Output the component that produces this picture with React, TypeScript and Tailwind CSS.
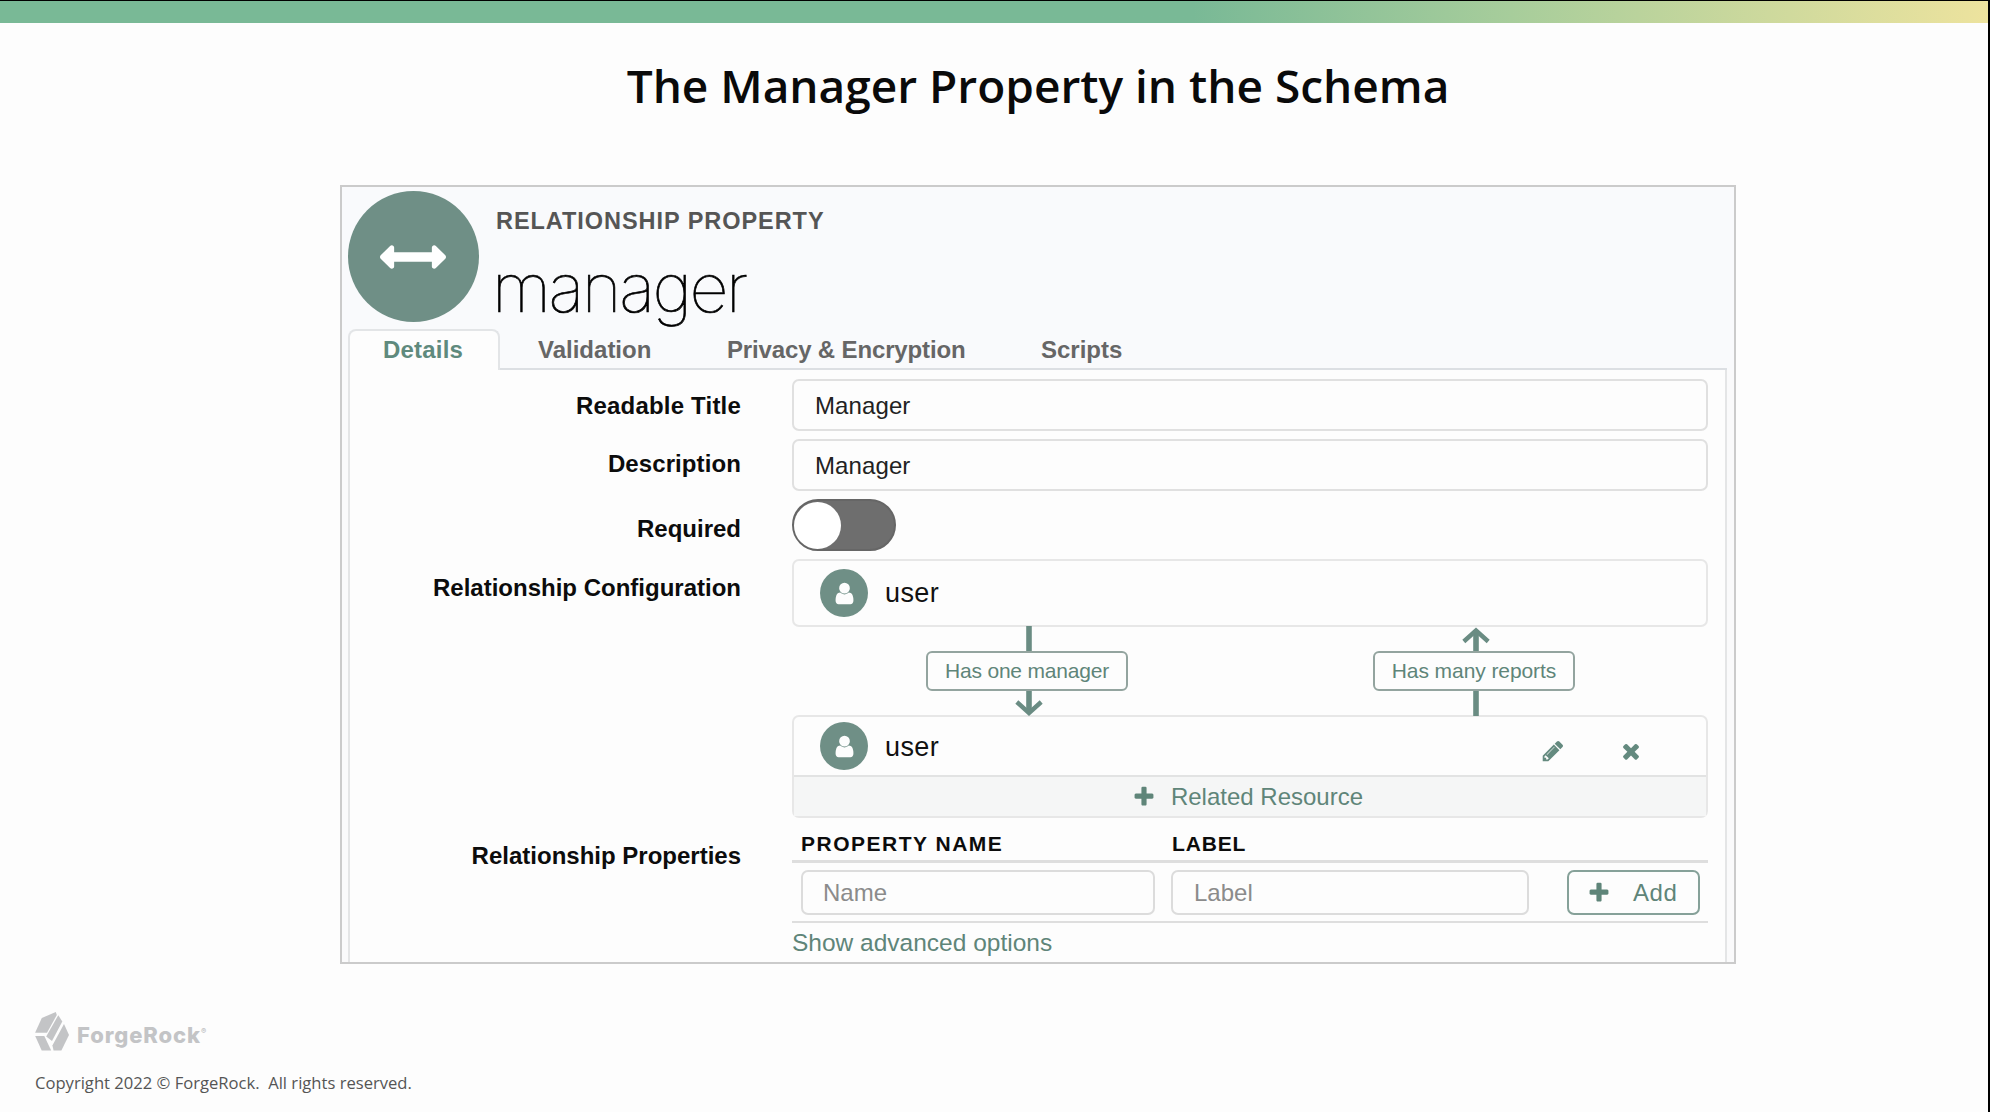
import type { ReactNode } from "react";

const ICONS = {
  arrows:
    "M1792 896q0 26-19 45l-256 256q-19 19-45 19t-45-19-19-45v-128h-1024v128q0 26-19 45t-45 19-45-19l-256-256q-19-19-19-45t19-45l256-256q19-19 45-19t45 19 19 45v128h1024v-128q0-26 19-45t45-19 45 19l256 256q19 19 19 45z",
  user: "M1536 1399q0 109-62.5 187t-150.5 78h-854q-88 0-150.5-78t-62.5-187q0-85 8.5-160.5t31.5-152 58.5-131 94-89 134.5-34.5q131 128 313 128t313-128q76 0 134.5 34.5t94 89 58.5 131 31.5 152 8.5 160.5zm-256-887q0 159-112.5 271.5t-271.5 112.5-271.5-112.5-112.5-271.5 112.5-271.5 271.5-112.5 271.5 112.5 112.5 271.5z",
  plus: "M1600 736v192q0 40-28 68t-68 28h-416v416q0 40-28 68t-68 28h-192q-40 0-68-28t-28-68v-416h-416q-40 0-68-28t-28-68v-192q0-40 28-68t68-28h416v-416q0-40 28-68t68-28h192q40 0 68 28t28 68v416h416q40 0 68 28t28 68z",
  times:
    "M1490 1322q0 40-28 68l-136 136q-28 28-68 28t-68-28l-294-294-294 294q-28 28-68 28t-68-28l-136-136q-28-28-28-68t28-68l294-294-294-294q-28-28-28-68t28-68l136-136q28-28 68-28t68 28l294 294 294-294q28-28 68-28t68 28l136 136q28 28 28 68t-28 68l-294 294 294 294q28 28 28 68z",
  pencil:
    "M491 1536l91-91-235-235-91 91v107h128v128h107zm523-928q0-22-22-22-10 0-17 7l-542 542q-7 7-7 17 0 22 22 22 10 0 17-7l542-542q7-7 7-17zm-54-192l416 416-832 832h-416v-416zm683 96q0 53-37 90l-166 166-416-416 166-165q36-38 90-38 53 0 91 38l235 234q37 39 37 91z",
};

function Icon({ name, className }: { name: keyof typeof ICONS; className: string }) {
  return (
    <svg viewBox="0 0 1792 1792" fill="currentColor" className={className} aria-hidden="true">
      <path d={ICONS[name]} />
    </svg>
  );
}

function Row({
  label,
  labelClass,
  className = "",
  children,
}: {
  label: string;
  labelClass: string;
  className?: string;
  children: ReactNode;
}) {
  return (
    <div className={`flex gap-[51px] ${className}`}>
      <div
        className={`w-[391px] shrink-0 text-right text-[24px] leading-[30px] font-bold whitespace-nowrap text-[#0c0c0c] ${labelClass}`}
      >
        {label}
      </div>
      <div className="w-[916px] shrink-0">{children}</div>
    </div>
  );
}

function TextInput({ value }: { value: string }) {
  return (
    <div className="flex h-[52px] items-center rounded-[7px] border-2 border-[#e0e0e0] pt-px pl-[21px] text-[24px] tracking-[0.1px] text-[#222]">
      {value}
    </div>
  );
}

function Resource({ className, textClass, children }: { className: string; textClass?: string; children?: ReactNode }) {
  return (
    <div className={`flex items-center pl-[26px] ${className}`}>
      <span className="flex size-12 items-center justify-center rounded-full bg-[#6f8f86] text-[#fdfdfd]">
        <Icon name="user" className="size-[25px]" />
      </span>
      <span className={`ml-[17px] text-[27px] leading-[30px] tracking-[0.4px] text-[#111] ${textClass ?? ""}`}>
        user
      </span>
      {children}
    </div>
  );
}

function Stem({ head }: { head?: "up" | "down" }) {
  return (
    <svg viewBox="0 0 30 25" className="h-[25px] w-[30px]" fill="none" stroke="#6a8c83" aria-hidden="true">
      <path d={head === "up" ? "M15 4V25" : head === "down" ? "M15 0V22" : "M15 0V25"} strokeWidth="5.6" />
      {head === "down" && <path d="M2.8 11L15 22L27.2 11" strokeWidth="4.4" />}
      {head === "up" && <path d="M2.8 15.5L15 4.5L27.2 15.5" strokeWidth="4.4" />}
    </svg>
  );
}

function Connector({ label, up, className }: { label: string; up?: boolean; className: string }) {
  return (
    <div className={`flex w-[202px] flex-col items-center ${className}`}>
      <div className="pl-[4px]">
        <Stem head={up ? "up" : undefined} />
      </div>
      <div className="flex h-[40px] w-full items-center justify-center rounded-[6px] border-2 border-[#93a49f] text-[21px] whitespace-nowrap text-[#5f8579]">
        {label}
      </div>
      <div className="pl-[4px]">
        <Stem head={up ? undefined : "down"} />
      </div>
    </div>
  );
}

function BrandMark() {
  return (
    <svg viewBox="0 0 34 39" className="h-[39px] w-[34px]" fill="#c3c4c6" aria-hidden="true">
      <path d="M20.8 0L21.8 3L12 20.8H0.1L6.8 6Z" />
      <path d="M23.3 3.2L27.3 9.6L17 29L11.2 24.4Z" />
      <path d="M29 12L34 23L26.4 38.4H18.6L17.4 33.6Z" />
      <path d="M0.2 24H9.3L16.2 38.4H6.7Z" />
    </svg>
  );
}

export default function App() {
  return (
    <div className="flex h-[1112px] w-[1990px] flex-col overflow-hidden border-t border-r-2 border-black bg-[#fdfdfd] font-['Liberation_Sans',sans-serif]">
      <div className="h-[22px] w-full shrink-0 bg-linear-to-r from-[#79b996] from-60% via-[#a7cd9b] via-76% to-[#ede39e] to-100%" />

      <main className="ml-[340px] w-[1396px]">
        <h1 className="mt-[32px] text-center font-['Open_Sans',sans-serif] text-[46px] leading-[60px] font-semibold text-[#0a0a0a]">
          The Manager Property in the Schema
        </h1>

        <section className="mt-[70px] flex h-[779px] flex-col border-2 border-[#cbcbcb] bg-[#fafafb]">
          <header className="bg-[#f9fafc] pr-[7px] pl-[6px]">
            <div className="flex h-[142px] pt-[4px]">
              <div className="flex size-[131px] items-center justify-center rounded-full bg-[#6f8f86] pr-px text-white">
                <Icon name="arrows" className="size-[66px]" />
              </div>
              <div className="ml-[17px]">
                <div className="pt-[15px] text-[23.5px] leading-[30px] font-bold tracking-[0.95px] whitespace-nowrap text-[#555]">
                  RELATIONSHIP PROPERTY
                </div>
                <div className="-ml-[4px] pt-[16px] font-[Inter,sans-serif] text-[68px] leading-[70px] font-thin tracking-[-2.4px] text-black [-webkit-text-stroke:0.7px_black]">
                  manager
                </div>
              </div>
            </div>
            <nav className="flex h-[41px] text-[24px] leading-[30px] font-bold whitespace-nowrap text-[#666]">
              <div className="w-[152px] rounded-t-[8px] border-2 border-b-0 border-[#e3e5e7] bg-[#fdfdfd] pt-[4px] pl-[33px] tracking-[0.2px] text-[#5f8a7d]">
                Details
              </div>
              <div className="flex grow border-b-2 border-[#dcdfe3] pt-[6px]">
                <span className="ml-[38px] w-[189px]">Validation</span>
                <span className="w-[314px] tracking-[-0.15px]">Privacy &amp; Encryption</span>
                <span>Scripts</span>
              </div>
            </nav>
          </header>

          <div className="mr-[7px] ml-[6px] grow border-x-2 border-[#e4e5e6] bg-[#fdfdfd]">
            <Row label="Readable Title" labelClass="pt-[12px] tracking-[0.2px]" className="mt-[9px]">
              <TextInput value="Manager" />
            </Row>
            <Row label="Description" labelClass="pt-[10px] tracking-[0.1px]" className="mt-[8px]">
              <TextInput value="Manager" />
            </Row>
            <Row label="Required" labelClass="pt-[15px]" className="mt-[8px]">
              <div className="flex h-[52px] w-[104px] items-center rounded-full border-2 border-[#666] bg-[#6e6e6e]">
                <span className="size-[47px] rounded-full bg-white" />
              </div>
            </Row>
            <Row label="Relationship Configuration" labelClass="pt-[14px]" className="mt-[8px]">
              <div className="rounded-[7px] border-2 border-[#e7e7e7]">
                <Resource className="h-[64px]" />
              </div>
              <div className="-my-px flex">
                <Connector label="Has one manager" className="ml-[134px] tracking-[-0.2px]" />
                <Connector label="Has many reports" up className="ml-[245px] tracking-[-0.08px]" />
              </div>
              <div className="rounded-[7px] border-2 border-[#e7e7e7]">
                <Resource className="h-[58px]" textClass="pt-[2px]">
                  <div className="ml-auto flex gap-[54px] pt-[9px] pr-[63px] text-[#648a7f]">
                    <Icon name="pencil" className="size-[24px]" />
                    <Icon name="times" className="size-[24px]" />
                  </div>
                </Resource>
                <div className="flex h-[41px] items-center justify-center gap-[15px] border-t-2 border-[#e2e3e3] bg-[#f5f6f6] pr-[5px] text-[24px] leading-[30px] text-[#5f8579]">
                  <Icon name="plus" className="size-[24px]" />
                  <span>Related Resource</span>
                </div>
              </div>
            </Row>
            <Row label="Relationship Properties" labelClass="pt-[23px]">
              <div className="flex h-[45px] border-b-[3px] border-[#dedede] pt-[14px] text-[21px] leading-[24px] font-bold text-[#0c0c0c]">
                <span className="ml-[9px] w-[371px] tracking-[1.5px]">PROPERTY NAME</span>
                <span className="tracking-[0.85px]">LABEL</span>
              </div>
              <div className="flex h-[60px] border-b-2 border-[#dedede] pt-[7px] pl-[9px] text-[24px]">
                <div className="flex h-[45px] w-[354px] items-center rounded-[7px] border-2 border-[#dcdcdc] pl-[20px] text-[#8b8b8b]">
                  Name
                </div>
                <div className="ml-[16px] flex h-[45px] w-[358px] items-center rounded-[7px] border-2 border-[#dcdcdc] pl-[21px] text-[#8b8b8b]">
                  Label
                </div>
                <div className="ml-[38px] flex h-[45px] w-[133px] items-center rounded-[7px] border-2 border-[#86a199] pl-[18px] tracking-[0.6px] text-[#5f8579]">
                  <Icon name="plus" className="size-[24px]" />
                  <span className="ml-[22px] pt-px">Add</span>
                </div>
              </div>
              <div className="pt-[5px] text-[24.5px] leading-[30px] text-[#5f8579]">Show advanced options</div>
            </Row>
          </div>
        </section>
      </main>

      <footer className="mt-[48px] ml-[35px]">
        <div className="flex h-[39px] items-center">
          <BrandMark />
          <div className="ml-[8px] flex pt-[6px] font-[Inter,sans-serif] text-[22px] leading-[30px] font-extrabold tracking-[0.9px] text-[#c3c4c6]">
            ForgeRock
            <span className="text-[8px] leading-[22px]">®</span>
          </div>
        </div>
        <div className="mt-[20px] font-['Open_Sans',sans-serif] text-[16.6px] leading-[24px] whitespace-pre text-[#555]">
          {"Copyright 2022 © ForgeRock.  All rights reserved."}
        </div>
      </footer>
    </div>
  );
}
